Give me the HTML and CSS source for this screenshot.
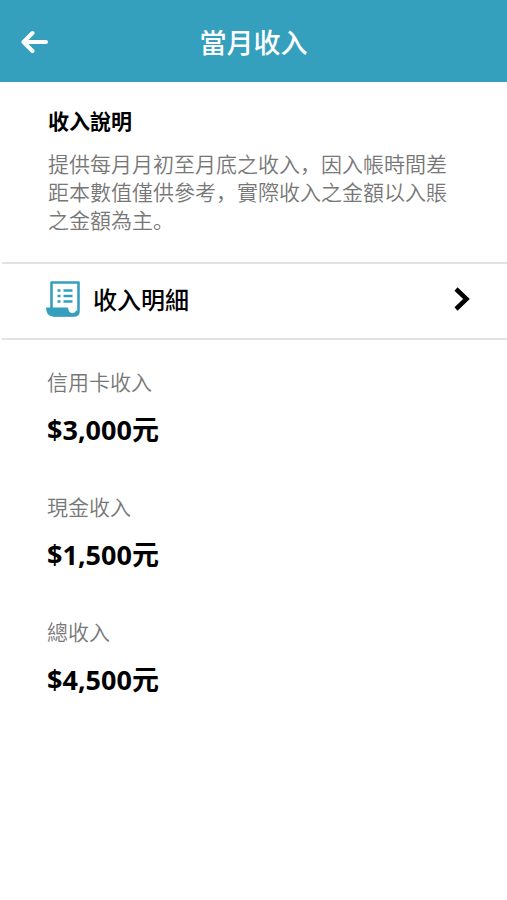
FILE: index.html
```html
<!DOCTYPE html>
<html lang="zh-Hans">
<head>
<meta charset="utf-8">
<meta name="viewport" content="width=device-width, initial-scale=1">
<title>當月收入</title>
<link rel="stylesheet" href="styles.css">
</head>
<body>
<header class="topbar">
  <button class="back" type="button" aria-label="返回">
    <svg width="28" height="24" viewBox="0 0 28 24" fill="none" stroke="currentColor" stroke-width="4" stroke-linecap="round" stroke-linejoin="round"><path d="M25 12H3M11.500 3L2.500 12l9 9"/></svg>
  </button>
  <h1 class="topbar-title">當月收入</h1>
</header>
<main>
  <section class="intro">
    <h2 class="intro-title">收入說明</h2>
    <p class="intro-text">提供每月月初至月底之收入，因入帳時間差距本數值僅供參考，實際收入之金額以入賬之金額為主。</p>
  </section>
  <a class="detail" href="#detail">
    <svg class="detail-icon" width="34" height="36" viewBox="0 0 34 36">
      <path d="M5.500 27V1.500H32.500V30Q32.500 34.500 28 34.500H7" fill="#fff" stroke="#35a0be" stroke-width="2.600" stroke-linejoin="round"/>
      <path d="M0 26.500H22Q22.500 32 26.500 32Q29.500 32 30 29L32 31Q31 35.500 27 35.500H7Q0 35 0 26.500Z" fill="#35a0be"/>
      <path d="M23.500 26Q23.500 30.800 27 30.800Q30.800 30.800 31 27V22H23.500Z" fill="#fff"/>
      <path d="M11.500 9.500h3M11.500 15h3M11.500 20.500h3M17.500 9.500h9M17.500 15h9M17.500 20.500h9" stroke="#35a0be" stroke-width="2.600"/>
    </svg>
    <span class="detail-label">收入明細</span>
    <svg class="chevron" width="16" height="24" viewBox="0 0 16 24" fill="none" stroke="currentColor" stroke-width="4.500"><path d="M2 2l10.500 10L2 22"/></svg>
  </a>
  <dl class="amounts">
    <div class="amount"><dt>信用卡收入</dt><dd>$3,000元</dd></div>
    <div class="amount"><dt>現金收入</dt><dd>$1,500元</dd></div>
    <div class="amount"><dt>總收入</dt><dd>$4,500元</dd></div>
  </dl>
</main>
</body>
</html>
```
FILE: styles.css
```css
* {
  box-sizing: border-box;
}

body,
h1,
h2,
p,
dl,
dd {
  margin: 0;
}

body {
  background: #fff;
  color: #000;
  font-family: "Noto Sans CJK SC", sans-serif;
}

.topbar {
  display: grid;
  grid-template-columns: 28px 1fr 28px;
  align-items: center;
  height: 82px;
  padding: 2px 21px 0;
  background: #35a0be;
  color: #fff;
}

.back {
  display: flex;
  padding: 0;
  border: 0;
  background: none;
  color: inherit;
}

.topbar-title {
  font-size: 27px;
  font-weight: 500;
  line-height: 40px;
  text-align: center;
}

.intro {
  padding: 23px 48px 29px;
}

.intro-title {
  font-size: 21px;
  font-weight: 700;
  line-height: 30px;
}

.intro-text {
  margin-top: 14px;
  color: #777;
  font-size: 21px;
  font-weight: 350;
  line-height: 28px;
}

.detail {
  display: flex;
  align-items: center;
  height: 78px;
  margin-left: 2px;
  padding: 0 37px 4px 44px;
  border: solid #e2e2e2;
  border-width: 2px 0;
  color: inherit;
  text-decoration: none;
}

.detail-label {
  flex: 1;
  margin-left: 13px;
  font-size: 24px;
  font-weight: 500;
  line-height: 36px;
}

.amounts {
  padding: 26px 47px;
}

.amount {
  margin-bottom: 41px;
}

.amount dt {
  color: #777;
  font-size: 21px;
  font-weight: 350;
  line-height: 30px;
}

.amount dd {
  margin-top: 14px;
  font-family: "Noto Sans", "Noto Sans CJK SC", sans-serif;
  font-size: 27px;
  font-weight: 700;
  line-height: 40px;
}
```
